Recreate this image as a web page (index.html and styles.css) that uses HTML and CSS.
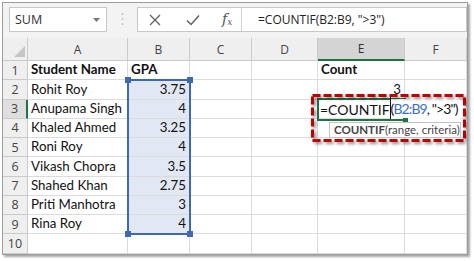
FILE: index.html
```html
<!DOCTYPE html>
<html>
<head>
<meta charset="utf-8">
<link rel="stylesheet" href="styles.css">
</head>
<body>
<div class="frame">
  <div class="toolbar">
    <div class="namebox">
      <span>SUM</span>
      <svg class="caret" width="7" height="4" viewBox="0 0 7 4"><path d="M0 0h7L3.5 4z" fill="#777"/></svg>
    </div>
    <svg class="grip" width="3" height="14" viewBox="0 0 3 14"><circle cx="1.5" cy="2" r="1" fill="#c4c4c4"/><circle cx="1.5" cy="7" r="1" fill="#c4c4c4"/><circle cx="1.5" cy="12" r="1" fill="#c4c4c4"/></svg>
    <div class="fbox">
      <div class="fbtns">
        <svg class="ico" width="12" height="12" viewBox="0 0 12 12"><path d="M1 1L11 11M11 1L1 11" stroke="#606060" stroke-width="1.3" fill="none"/></svg>
        <svg class="ico chk" width="14" height="12" viewBox="0 0 14 12"><path d="M1 6.5L5 10.5L13 1.5" stroke="#606060" stroke-width="1.5" fill="none"/></svg>
        <span class="fx">f<sub>x</sub></span>
      </div>
      <div class="ftext">=COUNTIF(B2:B9, "&gt;3")</div>
    </div>
  </div>
  <div class="sheet">
    <div class="grid">
      <div class="c h corner"><svg width="11" height="11" viewBox="0 0 11 11"><path d="M11 0V11H0z" fill="#c6c6c6"/></svg></div>
      <div class="c h">A</div><div class="c h">B</div><div class="c h">C</div><div class="c h">D</div><div class="c h hsel-col">E</div><div class="c h">F</div>

      <div class="c h rn">1</div><div class="c b">Student Name</div><div class="c b">GPA</div><div class="c"></div><div class="c"></div><div class="c b">Count</div><div class="c"></div>
      <div class="c h rn">2</div><div class="c">Rohit Roy</div><div class="c s n">3.75</div><div class="c"></div><div class="c"></div><div class="c n">3</div><div class="c"></div>
      <div class="c h rn hsel-row">3</div><div class="c">Anupama Singh</div><div class="c s n">4</div><div class="c"></div><div class="c"></div><div class="c"></div><div class="c"></div>
      <div class="c h rn">4</div><div class="c">Khaled Ahmed</div><div class="c s n">3.25</div><div class="c"></div><div class="c"></div><div class="c"></div><div class="c"></div>
      <div class="c h rn">5</div><div class="c">Roni Roy</div><div class="c s n">4</div><div class="c"></div><div class="c"></div><div class="c"></div><div class="c"></div>
      <div class="c h rn">6</div><div class="c">Vikash Chopra</div><div class="c s n">3.5</div><div class="c"></div><div class="c"></div><div class="c"></div><div class="c"></div>
      <div class="c h rn">7</div><div class="c">Shahed Khan</div><div class="c s n">2.75</div><div class="c"></div><div class="c"></div><div class="c"></div><div class="c"></div>
      <div class="c h rn">8</div><div class="c">Priti Manhotra</div><div class="c s n">3</div><div class="c"></div><div class="c"></div><div class="c"></div><div class="c"></div>
      <div class="c h rn">9</div><div class="c">Rina Roy</div><div class="c s n">4</div><div class="c"></div><div class="c"></div><div class="c"></div><div class="c"></div>
      <div class="c h rn">10</div><div class="c"></div><div class="c"></div><div class="c"></div><div class="c"></div><div class="c"></div><div class="c"></div>
    </div>

    <div class="range">
      <i class="hd tl"></i><i class="hd tr"></i><i class="hd bl"></i><i class="hd br"></i>
    </div>

    <div class="editcell"></div>
    <div class="edittext"><span class="inl">=COUNTIF</span><span class="cur"></span><span class="ovr">(<span class="ref">B2:B9</span>, "&gt;3")</span></div>
    <i class="fillh"></i>
    <div class="tip"><b>COUNTIF</b>(range, criteria)</div>

    <svg class="redbox" width="157" height="50" viewBox="0 0 157 50"><rect x="1.5" y="1.5" width="152" height="45" fill="none" stroke="#c00000" stroke-width="3" stroke-dasharray="8 3"/></svg>
  </div>
</div>
</body>
</html>
```
FILE: styles.css
```css
* { box-sizing: border-box; }
html, body { margin: 0; padding: 0; background: #fff; }
body { width: 474px; height: 261px; overflow: hidden; }

.frame {
  margin: 2px 0 0 2px;
  width: 466px;
  height: 253px;
  border: 1px solid #9c9c9c;
  box-shadow: 2px 2px 2px rgba(0,0,0,0.35);
  background: #fff;
  overflow: hidden;
}

.toolbar {
  height: 35px;
  background: #f3f3f3;
  display: flex;
  align-items: flex-start;
  padding-top: 4px;
}
.namebox {
  margin-left: 6px;
  width: 98px;
  height: 25px;
  background: #fff;
  border: 1px solid #c8c8c8;
  display: flex;
  align-items: center;
  justify-content: space-between;
  padding: 0 6px 0 5px;
  font: 12.5px "Open Sans", sans-serif;
  color: #333;
}
.grip { margin: 5px 0 0 14px; }
.fbox {
  margin-left: 13px;
  width: 330px;
  height: 25px;
  background: #fff;
  border: 1px solid #c8c8c8;
  display: flex;
  align-items: center;
}
.fbtns {
  width: 104px;
  height: 100%;
  border-right: 1px solid #d0d0d0;
  display: flex;
  align-items: center;
  padding-left: 11px;
}
.ico { display: block; }
.chk { margin-left: 25px; }
.fx {
  margin-left: 22px;
  font: italic 14px "DejaVu Serif", serif;
  color: #555;
  line-height: 1;
}
.fx sub { font-size: 9px; vertical-align: -1px; }
.ftext {
  padding-left: 16px;
  font: 12px "Open Sans", sans-serif;
  color: #222;
}

.sheet { position: relative; height: 216px; }
.grid {
  display: grid;
  grid-template-columns: 25px 100px 62px 62px 66px 87px 1fr;
  grid-template-rows: 23px repeat(10, 19.25px);
}
.c {
  border-right: 1px solid #dcdcdc;
  border-bottom: 1px solid #dcdcdc;
  font: 13.3px Lato, sans-serif;
  color: #111;
  display: flex;
  align-items: flex-end;
  padding: 0 3px 1px 3px;
  white-space: nowrap;
  line-height: 17px;
}
.b { font-weight: bold; }
.n { justify-content: flex-end; }
.s { background: #e1e8f4; }
.h {
  background: #efefef;
  border-right-color: #cacaca;
  border-bottom-color: #cacaca;
  font: 12px "Open Sans", sans-serif;
  color: #444;
  justify-content: center;
  align-items: center;
  padding: 0;
}
.rn { font-size: 12.5px; }
.corner { justify-content: flex-end; align-items: flex-end; padding: 0 2px 3px 0; }
.corner svg { display: block; }
.hsel-col { background: #d4d4d4; border-bottom: 2px solid #217346; color: #333; }
.hsel-row { background: #dedede; border-right: 2px solid #217346; }

.range {
  position: absolute;
  left: 124px;
  top: 41px;
  width: 64px;
  height: 156px;
  border: 2px solid #3f68b4;
}
.hd {
  position: absolute;
  width: 6px;
  height: 6px;
  background: #3f68b4;
}
.tl { left: -4px; top: -4px; }
.tr { right: -4px; top: -4px; }
.bl { left: -4px; bottom: -4px; }
.br { right: -4px; bottom: -4px; }

.editcell {
  position: absolute;
  left: 314px;
  top: 60px;
  width: 89px;
  height: 23px;
  border: 2px solid #217346;
}
.edittext {
  position: absolute;
  left: 317px;
  top: 61px;
  height: 20px;
  display: flex;
  align-items: center;
  font: 14px Lato, sans-serif;
  color: #111;
  white-space: nowrap;
}
.cur {
  display: inline-block;
  width: 1px;
  height: 22px;
  background: #111;
  margin-top: -2px;
}
.ovr { background: #fff; padding-right: 2px; height: 20px; line-height: 20px; letter-spacing: -0.9px; }
.ref { color: #3b6fc4; }
.fillh {
  position: absolute;
  left: 400px;
  top: 80px;
  width: 5px;
  height: 5px;
  background: #217346;
}
.tip {
  position: absolute;
  left: 326px;
  top: 84px;
  width: 132px;
  height: 16px;
  background: #fff;
  border: 1px solid #c2c2c2;
  font: 11.5px Lato, sans-serif;
  color: #444;
  line-height: 14px;
  padding-left: 4px;
  white-space: nowrap;
}
.tip b { font-weight: bold; color: #444; }
.redbox {
  position: absolute;
  left: 308px;
  top: 56px;
  filter: drop-shadow(2px 2px 1.5px rgba(0,0,0,0.45));
}
```
